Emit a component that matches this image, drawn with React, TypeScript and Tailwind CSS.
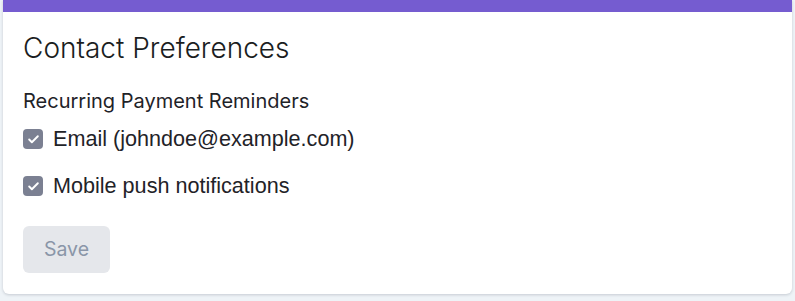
import { Check } from 'lucide-react'

function Option({ label }: { label: string }) {
  return (
    <label className="flex h-[28px] items-center gap-[10px]">
      <span className="flex h-[20px] w-[20px] items-center justify-center rounded-[4px] bg-[#7b8092]">
        <Check className="h-[13px] w-[13px] text-white" strokeWidth={3.5} />
      </span>
      <span className="font-['Liberation_Sans',Arial,sans-serif] text-[21.6px] leading-[28px] text-[#1f2328]">
        {label}
      </span>
    </label>
  )
}

export default function App() {
  return (
    <div className="min-h-[301px] bg-[#eef3f7] px-[3px] pb-[7px] font-['Inter',sans-serif]">
      <div className="overflow-hidden rounded-b-[6px] bg-white shadow-[0_1px_3px_rgba(15,23,42,0.18)]">
        <div className="h-[12px] bg-[#755cd0]" />
        <div className="px-[20px] pb-[21px] pt-[18px]">
          <h2 className="text-[28px] font-light leading-[36px] text-[#1a1d21]">Contact Preferences</h2>
          <p className="mt-[21px] text-[20px] leading-[28px] text-[#1f2328]">Recurring Payment Reminders</p>
          <div className="mt-[10px] flex flex-col gap-[19px]">
            <Option label="Email (johndoe@example.com)" />
            <Option label="Mobile push notifications" />
          </div>
          <button
            disabled
            className="mt-[26px] h-[47px] w-[87px] rounded-[6px] bg-[#e5e7eb] text-[19.5px] text-[#8a96a8]"
          >
            Save
          </button>
        </div>
      </div>
    </div>
  )
}
